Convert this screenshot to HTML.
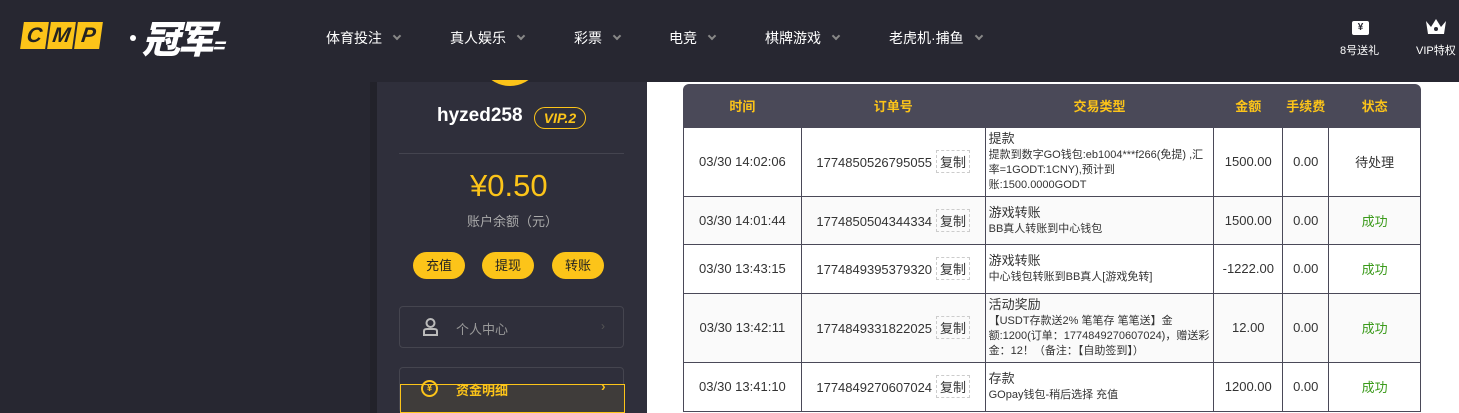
<!DOCTYPE html>
<html><head><meta charset="utf-8"><style>
*{margin:0;padding:0;box-sizing:border-box}
html,body{width:1459px;height:413px;overflow:hidden}
body{background:#272731;font-family:"Liberation Sans","Noto Sans CJK SC",sans-serif;position:relative}
.abs{position:absolute}
.hdr{left:0;top:0;width:1459px;height:82px;background:#272731}
.logo b{position:absolute;top:22px;width:25px;height:27px;background:#fcc419;transform:skewX(-8deg);color:#222;font:italic 900 21px "Liberation Sans",sans-serif;text-align:center;line-height:27px}
.nav{top:28px;color:#fff;font-size:14px}
.nav i{display:inline-block;width:6px;height:6px;border-right:2px solid #888;border-bottom:2px solid #888;transform:rotate(45deg);margin-left:12px;position:relative;top:-4px}
.side{left:377px;top:82px;width:270px;height:331px;background:#2f2f3b}
.main{left:647px;top:82px;width:812px;height:331px;background:#fff}
table{position:absolute;left:683px;top:84px;width:738px;border-collapse:collapse;font-size:13px;color:#333}
th{color:#fcc419;font-weight:bold;height:43px;font-size:13px}
td{border:1px solid #4a4958;text-align:center;height:48px}
td.t{text-align:left;padding:1px 3px;line-height:15px;font-size:11px}
td.t div{font-size:13px;line-height:18px}
.cp{display:inline-block;border:1px dashed #ccc;padding:1px 3px;margin-left:4px}
.ok{color:#3a9a1a}
tr.g td{background:#fafafa}
.btn{top:252px;width:52px;height:27px;background:#fcc419;border-radius:14px;font-size:13px;text-align:center;line-height:27px;color:#222}
</style></head><body>
<div class="abs hdr"></div>
<div class="logo"><b style="left:22px">C</b><b style="left:49px">M</b><b style="left:76px">P</b></div>
<div class="abs" style="left:130px;top:35px;width:6px;height:6px;background:#fff;border-radius:50%"></div>
<div class="abs" style="left:142px;top:16px;color:#fff;font:italic 900 38px 'Noto Sans CJK SC',sans-serif;line-height:42px;letter-spacing:-3px">冠军<span style="font-size:20px">=</span></div>
<div class="abs nav" style="left:326px">体育投注<i></i></div>
<div class="abs nav" style="left:450px">真人娱乐<i></i></div>
<div class="abs nav" style="left:574px">彩票<i></i></div>
<div class="abs nav" style="left:669px">电竞<i></i></div>
<div class="abs nav" style="left:765px">棋牌游戏<i></i></div>
<div class="abs nav" style="left:889px">老虎机·捕鱼<i></i></div>
<div class="abs" style="left:1352px;top:21px;width:17px;height:14px;background:#fff;border-radius:2px;font-size:10px;text-align:center;line-height:14px;color:#272731;font-weight:bold">¥</div>
<div class="abs" style="left:1340px;top:42px;color:#fff;font-size:11px">8号送礼</div>
<svg class="abs" style="left:1425px;top:17px" width="22" height="18"><path d="M1 4 L6 10 L11 2 L16 10 L21 4 L19 17 L3 17Z" fill="#fff"/><circle cx="11" cy="12" r="2" fill="#272731"/></svg>
<div class="abs" style="left:1416px;top:42px;color:#fff;font-size:11px">VIP特权</div>
<div class="abs" style="left:370px;top:82px;width:7px;height:331px;background:#22222a"></div>
<div class="abs side"></div>
<div class="abs" style="left:470px;top:-20px;width:80px;height:106px;border-radius:50%;background:#fcc419;clip-path:inset(100px 0 0 0)"></div>
<div class="abs" style="left:437px;top:105px;color:#fff;font-size:19px;font-weight:bold">hyzed258</div>
<div class="abs" style="left:534px;top:107px;width:52px;height:22px;border:1px solid #fcc419;border-radius:11px;color:#fcc419;font:italic bold 14px 'Liberation Sans',sans-serif;text-align:center;line-height:20px">VIP.2</div>
<div class="abs" style="left:399px;top:153px;width:225px;height:1px;background:#44444f"></div>
<div class="abs" style="left:470px;top:168px;color:#fcc419;font-size:31px">¥0.50</div>
<div class="abs" style="left:467px;top:211px;color:#aaa;font-size:13px">账户余额（元）</div>
<div class="abs btn" style="left:413px">充值</div>
<div class="abs btn" style="left:482px">提现</div>
<div class="abs btn" style="left:552px">转账</div>
<div class="abs" style="left:399px;top:306px;width:225px;height:42px;border:1px solid #45454f;border-radius:4px"></div>
<svg class="abs" style="left:422px;top:318px" width="17" height="18"><circle cx="8.5" cy="5" r="4" fill="none" stroke="#bbb" stroke-width="2"/><path d="M2 17 V13 Q2 11 5 11 H12 Q15 11 15 13 V17Z" fill="none" stroke="#bbb" stroke-width="2"/></svg>
<div class="abs" style="left:456px;top:319px;color:#999;font-size:13px">个人中心</div>
<div class="abs" style="left:601px;top:319px;color:#555;font-size:12px">›</div>
<div class="abs" style="left:399px;top:367px;width:225px;height:46px;border:1px solid #45454f;border-radius:4px"></div>
<div class="abs" style="left:400px;top:384px;width:225px;height:29px;border:1px solid #fcc419;background:#3f3c3a"></div>
<div class="abs" style="left:421px;top:380px;width:17px;height:17px;border:2px solid #fcc419;border-radius:50%;color:#fcc419;font-size:10px;text-align:center;line-height:13px;font-weight:bold">¥</div>
<div class="abs" style="left:456px;top:380px;color:#fcc419;font-size:13px;font-weight:bold">资金明细</div>
<div class="abs" style="left:601px;top:378px;color:#fcc419;font-size:14px;font-weight:bold">›</div>
<div class="abs main"></div>
<div class="abs" style="left:683px;top:84px;width:738px;height:43px;background:#4a4958;border-radius:6px 6px 0 0"></div>
<table>
<tr><th style="width:118px">时间</th><th style="width:184px">订单号</th><th style="width:229px">交易类型</th><th style="width:69px">金额</th><th style="width:46px">手续费</th><th style="width:92px">状态</th></tr>
<tr style="height:69px"><td>03/30 14:02:06</td><td>1774850526795055<span class="cp">复制</span></td><td class="t"><div>提款</div>提款到数字GO钱包:eb1004***f266(免提) ,汇率=1GODT:1CNY),预计到账:1500.0000GODT</td><td>1500.00</td><td>0.00</td><td>待处理</td></tr>
<tr class="g" style="height:47px"><td>03/30 14:01:44</td><td>1774850504344334<span class="cp">复制</span></td><td class="t"><div>游戏转账</div>BB真人转账到中心钱包</td><td>1500.00</td><td>0.00</td><td class="ok">成功</td></tr>
<tr style="height:49px"><td>03/30 13:43:15</td><td>1774849395379320<span class="cp">复制</span></td><td class="t"><div>游戏转账</div>中心钱包转账到BB真人[游戏免转]</td><td>-1222.00</td><td>0.00</td><td class="ok">成功</td></tr>
<tr class="g" style="height:69px"><td>03/30 13:42:11</td><td>1774849331822025<span class="cp">复制</span></td><td class="t"><div>活动奖励</div>【USDT存款送2% 笔笔存 笔笔送】金额:1200(订单：1774849270607024)，赠送彩金：12！（备注：【自助签到】）</td><td>12.00</td><td>0.00</td><td class="ok">成功</td></tr>
<tr style="height:49px"><td>03/30 13:41:10</td><td>1774849270607024<span class="cp">复制</span></td><td class="t"><div>存款</div>GOpay钱包-稍后选择 充值</td><td>1200.00</td><td>0.00</td><td class="ok">成功</td></tr>
</table>
</body></html>
